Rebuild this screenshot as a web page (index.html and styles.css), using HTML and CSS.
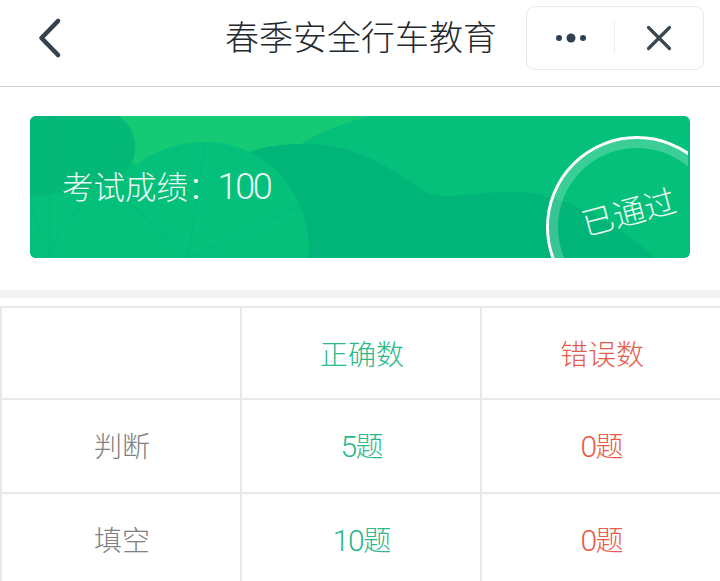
FILE: index.html
```html
<!DOCTYPE html>
<html lang="zh-CN">
<head>
<meta charset="utf-8">
<title>春季安全行车教育</title>
<link rel="stylesheet" href="styles.css">
</head>
<body>
<header class="nav">
  <button class="back" aria-label="返回">
    <svg width="40" height="50" viewBox="0 0 40 50"><path d="M23 8 6.500 25 23 42" fill="none" stroke="#36434f" stroke-width="4.600" stroke-linecap="round" stroke-linejoin="round"/></svg>
  </button>
  <h1 class="title">春季安全行车教育</h1>
  <div class="capsule">
    <div class="cap-btn">
      <svg width="36" height="12" viewBox="0 0 36 12"><circle cx="6" cy="6" r="3" fill="#2f4152"/><circle cx="18" cy="6" r="4.500" fill="#2f4152"/><circle cx="30" cy="6" r="3" fill="#2f4152"/></svg>
    </div>
    <div class="cap-btn cap-close">
      <svg width="26" height="26" viewBox="0 0 26 26"><path d="M2.500 2.500 23.500 23.500M23.500 2.500 2.500 23.500" fill="none" stroke="#3a4650" stroke-width="3.200" stroke-linecap="round"/></svg>
    </div>
  </div>
</header>

<section class="banner-wrap">
  <div class="banner">
    <svg class="banner-art" width="660" height="142" viewBox="0 0 660 142">
      <rect width="660" height="142" fill="#04c07a"/>
      <path d="M60 0H340C310 8 285 18 268 30 240 60 130 60 100 46Z" fill="#16ca75"/>
      <path d="M0 0H88C104 10 110 30 102 46 94 70 30 80 0 80Z" fill="#04b978"/>
      <path d="M0 80C30 80 60 70 66 142H0Z" fill="#04c07a"/>
      <path d="M220 36C240 28 270 26 300 30 340 36 370 60 395 76 420 86 450 74 490 76 540 80 590 110 625 142H240C250 100 240 60 220 36Z" fill="#01b478"/>
      <path d="M66 142C62 90 100 26 175 26 245 26 285 90 278 142Z" fill="#04c07a"/>
      <path d="M20 0V142M2 90 20 142 28 118M28 118 102 28M175 26 158 142M84 70 158 142M158 142 270 90" fill="none" stroke="#00b074" stroke-opacity=".28" stroke-width="1.500"/>
      <g fill="none" clip-path="url(#stamp-clip)">
        <circle cx="607" cy="111" r="83.500" stroke="#fff" stroke-opacity=".22" stroke-width="9"/>
        <circle cx="607" cy="111" r="89.500" stroke="#fff" stroke-width="3"/>
      </g>
      <clipPath id="stamp-clip"><rect width="658" height="142"/></clipPath>
    </svg>
    <p class="score">考试成绩：<span class="score-num">100</span></p>
    <span class="stamp">已通过</span>
  </div>
</section>

<div class="divider"></div>

<table class="result">
  <tr class="head">
    <td></td>
    <td class="ok">正确数</td>
    <td class="bad">错误数</td>
  </tr>
  <tr>
    <td class="label">判断</td>
    <td class="ok"><span class="num">5</span>题</td>
    <td class="bad"><span class="num">0</span>题</td>
  </tr>
  <tr>
    <td class="label">填空</td>
    <td class="ok"><span class="num">10</span>题</td>
    <td class="bad"><span class="num">0</span>题</td>
  </tr>
</table>
</body>
</html>
```
FILE: styles.css
```css
* { box-sizing: border-box; }
html, body {
  margin: 0;
  height: 581px;
  overflow: hidden;
  background: #fff;
}
body {
  font-family: Roboto, "Noto Sans CJK SC", sans-serif;
  font-weight: 300;
}
.nav {
  display: flex;
  align-items: center;
  height: 87px;
  padding: 0 16px 10px 30px;
  border-bottom: 1px solid #cfcfcf;
}
.back {
  display: flex;
  width: 40px;
  height: 50px;
  padding: 0;
  margin: 0 0 0 5px;
  border: 0;
  background: none;
}
.title {
  flex: 1;
  margin: 0;
  padding-left: 150px;
  font-size: 34px;
  font-weight: 300;
  line-height: 64px;
  color: #23282c;
  white-space: nowrap;
}
.capsule {
  display: flex;
  align-items: center;
  width: 178px;
  height: 64px;
  border: 1.500px solid #e8e8e8;
  border-radius: 9px;
}
.cap-btn {
  display: flex;
  align-items: center;
  justify-content: center;
  width: 87px;
  height: 32px;
}
.cap-close {
  width: 88px;
  border-left: 1px solid #eeeeee;
}
.banner-wrap {
  padding: 29px 30px 32px;
}
.banner {
  position: relative;
  display: flex;
  align-items: center;
  height: 142px;
  padding: 2px 0 0 32px;
  border-radius: 6px;
  overflow: hidden;
}
.banner-art {
  position: absolute;
  top: 0;
  left: 0;
}
.score {
  position: relative;
  margin: 0;
  font-size: 31.500px;
  line-height: 44px;
  color: #eafaf3;
}
.score-num {
  margin-left: -2px;
  font-size: 36px;
  letter-spacing: -2.300px;
}
.stamp {
  position: absolute;
  left: 551px;
  top: 77px;
  font-size: 32px;
  line-height: 40px;
  color: #e6f9f1;
  transform: rotate(-15deg);
}
.divider {
  height: 8px;
  background: #f3f2f3;
}
.result {
  width: 720px;
  margin-top: 8px;
  table-layout: fixed;
  border-collapse: separate;
  border-spacing: 0;
}
.result td {
  width: 240px;
  height: 94px;
  padding: 0 0 2px 2px;
  border-top: 2px solid #e8e8e8;
  border-left: 2px solid #e8e8e8;
  font-size: 28px;
  text-align: center;
}
.result .head td {
  height: 92px;
  padding-bottom: 0;
}
.num {
  font-size: 30px;
  letter-spacing: -1.500px;
}
.label { color: #808080; }
.ok { color: #2ab98a; }
.bad { color: #e65c4a; }
```
